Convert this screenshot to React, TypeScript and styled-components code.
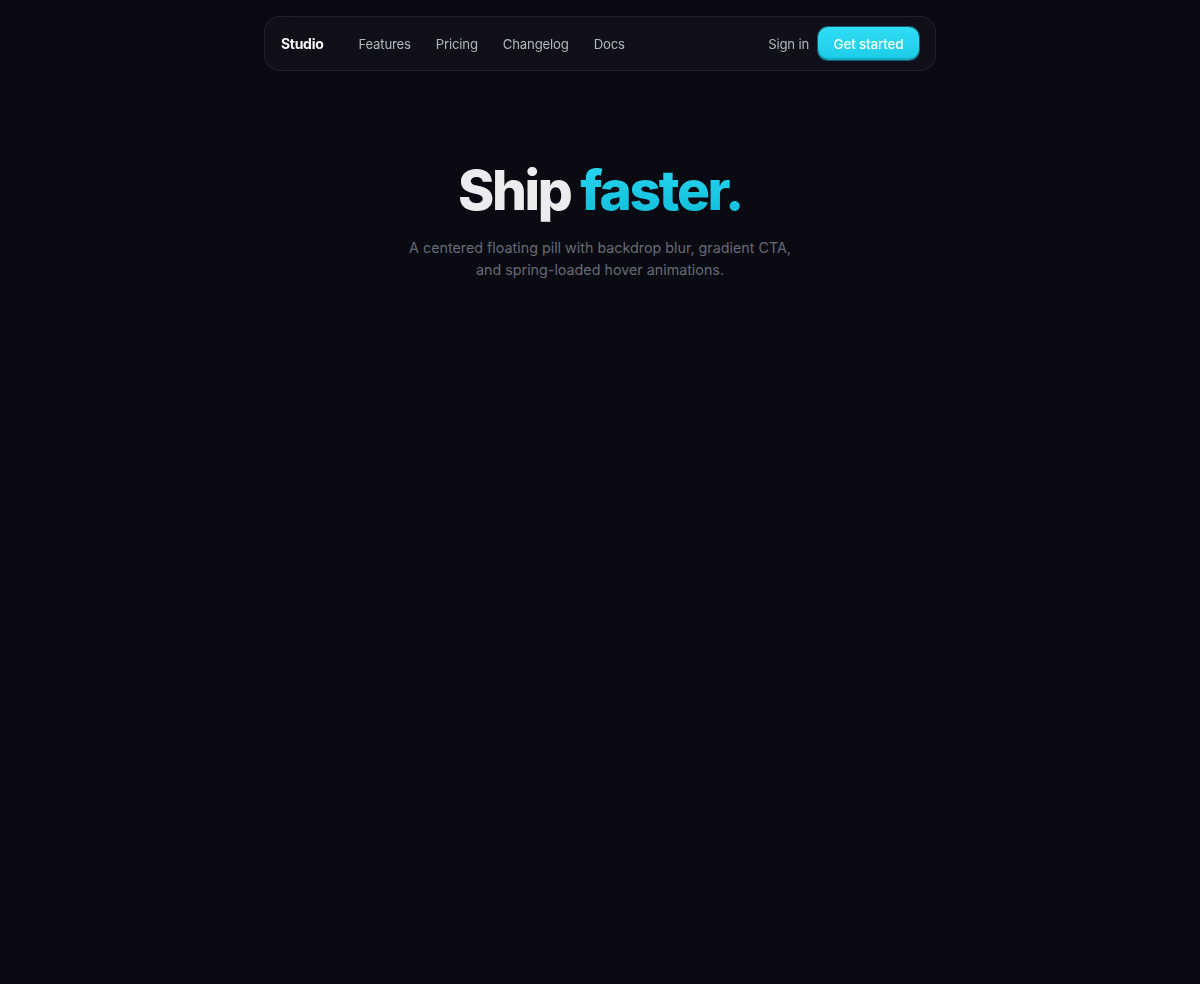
import styled, { createGlobalStyle } from 'styled-components';

const GlobalStyle = createGlobalStyle`
  html, body {
    margin: 0;
    padding: 0;
    background: #090a12;
  }
  body {
    font-family: Inter, "Noto Sans", sans-serif;
    -webkit-font-smoothing: antialiased;
  }
`;

const Page = styled.div`
  min-height: 984px;
  background: #090a12;
  display: flex;
  flex-direction: column;
  align-items: center;
  padding-top: 16px;
  box-sizing: border-box;
`;

const Nav = styled.nav`
  width: 672px;
  height: 55px;
  box-sizing: border-box;
  display: flex;
  align-items: center;
  padding: 0 16px 0 16px;
  border: 1px solid rgba(255, 255, 255, 0.08);
  border-radius: 16px;
  background: rgba(18, 19, 28, 0.7);
  backdrop-filter: blur(12px);
`;

const Brand = styled.a`
  color: #f4f4f6;
  font-size: 14px;
  font-weight: 700;
  letter-spacing: -0.3px;
  margin-right: 35px;
  text-decoration: none;
`;

const Links = styled.div`
  display: flex;
  align-items: center;
  gap: 25px;
  flex: 1;
`;

const NavLink = styled.a`
  color: #b3b5bf;
  font-size: 13.2px;
  font-weight: 400;
  letter-spacing: -0.2px;
  text-decoration: none;
`;

const Actions = styled.div`
  display: flex;
  align-items: center;
  gap: 9px;
`;

const CtaButton = styled.button`
  height: 33px;
  width: 101px;
  padding: 0;
  border: none;
  border-radius: 10px;
  background: linear-gradient(180deg, #2fdef5 0%, #1ccbe6 100%);
  box-shadow: inset 0 -2px 0 rgba(0, 0, 0, 0.15), 0 0 0 1px rgba(34, 211, 238, 0.4);
  color: #f8feff;
  font-family: inherit;
  font-size: 13.5px;
  font-weight: 500;
  letter-spacing: -0.2px;
  cursor: pointer;
`;

const Hero = styled.section`
  margin-top: 84px;
  display: flex;
  flex-direction: column;
  align-items: center;
  text-align: center;
`;

const Title = styled.h1`
  margin: 0;
  font-size: 55px;
  line-height: 70px;
  font-weight: 800;
  letter-spacing: -2.3px;
  color: #ececef;
`;

const Accent = styled.span`
  background: linear-gradient(180deg, #2ad8f2 0%, #0fbcd9 100%);
  -webkit-background-clip: text;
  background-clip: text;
  color: transparent;
`;

const Subtitle = styled.p`
  margin: 12px 0 0;
  max-width: 400px;
  font-size: 14.3px;
  line-height: 22px;
  color: #676a77;
`;

const App = () => (
  <>
    <GlobalStyle />
    <Page>
      <Nav>
        <Brand href="#">Studio</Brand>
        <Links>
          {['Features', 'Pricing', 'Changelog', 'Docs'].map((label) => (
            <NavLink key={label} href="#">{label}</NavLink>
          ))}
        </Links>
        <Actions>
          <NavLink href="#">Sign in</NavLink>
          <CtaButton>Get started</CtaButton>
        </Actions>
      </Nav>
      <Hero>
        <Title>
          Ship <Accent>faster.</Accent>
        </Title>
        <Subtitle>
          A centered floating pill with backdrop blur, gradient CTA, and spring-loaded hover animations.
        </Subtitle>
      </Hero>
    </Page>
  </>
);

export default App;
